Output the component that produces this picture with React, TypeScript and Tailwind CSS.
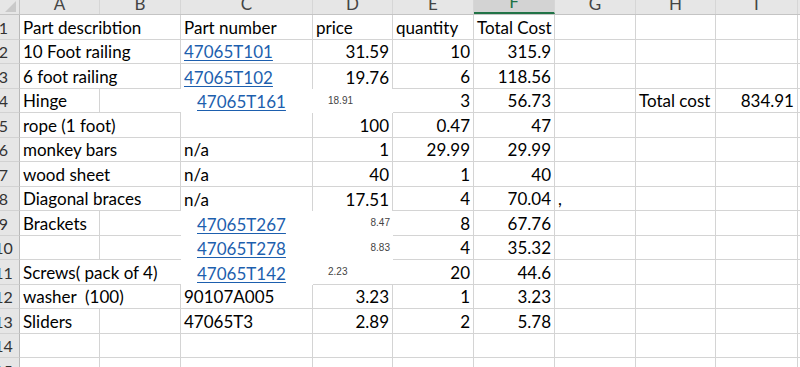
import React from "react";

// column widths in px, visible window only
const COLS: { key: string; w: number }[] = [
  { key: "A", w: 80 },
  { key: "B", w: 81 },
  { key: "C", w: 132 },
  { key: "D", w: 80 },
  { key: "E", w: 81 },
  { key: "F", w: 81 },
  { key: "G", w: 81 },
  { key: "H", w: 80 },
  { key: "I", w: 82 },
  { key: "J", w: 60 },
];

type Kind = "text" | "num" | "link" | "linkPad" | "small" | "smallRight";

interface Cell {
  v: string;
  kind?: Kind;
}

interface Row {
  n: number;
  spanAB?: boolean;
  hideR?: string[];
  hideB?: string[];
  cells: Record<string, Cell>;
}

const rows: Row[] = [
  {
    n: 1,
    spanAB: true,
    cells: {
      A: { v: "Part describtion" },
      C: { v: "Part number" },
      D: { v: "price" },
      E: { v: "quantity" },
      F: { v: "Total Cost" },
    },
  },
  {
    n: 2,
    spanAB: true,
    cells: {
      A: { v: "10 Foot railing" },
      C: { v: "47065T101", kind: "link" },
      D: { v: "31.59", kind: "num" },
      E: { v: "10", kind: "num" },
      F: { v: "315.9", kind: "num" },
    },
  },
  {
    n: 3,
    spanAB: true,
    hideB: ["C", "D"],
    cells: {
      A: { v: "6 foot railing" },
      C: { v: "47065T102", kind: "link" },
      D: { v: "19.76", kind: "num" },
      E: { v: "6", kind: "num" },
      F: { v: "118.56", kind: "num" },
    },
  },
  {
    n: 4,
    hideR: ["B", "C", "D"],
    hideB: ["C", "D"],
    cells: {
      A: { v: "Hinge" },
      C: { v: "47065T161", kind: "linkPad" },
      D: { v: "18.91", kind: "small" },
      E: { v: "3", kind: "num" },
      F: { v: "56.73", kind: "num" },
      H: { v: "Total cost" },
      I: { v: "834.91", kind: "num" },
    },
  },
  {
    n: 5,
    spanAB: true,
    cells: {
      A: { v: "rope (1 foot)" },
      D: { v: "100", kind: "num" },
      E: { v: "0.47", kind: "num" },
      F: { v: "47", kind: "num" },
    },
  },
  {
    n: 6,
    spanAB: true,
    cells: {
      A: { v: "monkey bars" },
      C: { v: "n/a" },
      D: { v: "1", kind: "num" },
      E: { v: "29.99", kind: "num" },
      F: { v: "29.99", kind: "num" },
    },
  },
  {
    n: 7,
    spanAB: true,
    cells: {
      A: { v: "wood sheet" },
      C: { v: "n/a" },
      D: { v: "40", kind: "num" },
      E: { v: "1", kind: "num" },
      F: { v: "40", kind: "num" },
    },
  },
  {
    n: 8,
    spanAB: true,
    hideB: ["C", "D"],
    cells: {
      A: { v: "Diagonal braces" },
      C: { v: "n/a" },
      D: { v: "17.51", kind: "num" },
      E: { v: "4", kind: "num" },
      F: { v: "70.04", kind: "num" },
      G: { v: "," },
    },
  },
  {
    n: 9,
    hideR: ["B", "C", "D"],
    hideB: ["C", "D"],
    cells: {
      A: { v: "Brackets" },
      C: { v: "47065T267", kind: "linkPad" },
      D: { v: "8.47", kind: "smallRight" },
      E: { v: "8", kind: "num" },
      F: { v: "67.76", kind: "num" },
    },
  },
  {
    n: 10,
    hideR: ["B", "C", "D"],
    hideB: ["C", "D"],
    cells: {
      C: { v: "47065T278", kind: "linkPad" },
      D: { v: "8.83", kind: "smallRight" },
      E: { v: "4", kind: "num" },
      F: { v: "35.32", kind: "num" },
    },
  },
  {
    n: 11,
    spanAB: true,
    hideR: ["B", "C", "D"],
    hideB: ["C"],
    cells: {
      A: { v: "Screws( pack of 4)" },
      C: { v: "47065T142", kind: "linkPad" },
      D: { v: "2.23", kind: "small" },
      E: { v: "20", kind: "num" },
      F: { v: "44.6", kind: "num" },
    },
  },
  {
    n: 12,
    spanAB: true,
    cells: {
      A: { v: "washer  (100)" },
      C: { v: "90107A005" },
      D: { v: "3.23", kind: "num" },
      E: { v: "1", kind: "num" },
      F: { v: "3.23", kind: "num" },
    },
  },
  {
    n: 13,
    cells: {
      A: { v: "Sliders" },
      C: { v: "47065T3" },
      D: { v: "2.89", kind: "num" },
      E: { v: "2", kind: "num" },
      F: { v: "5.78", kind: "num" },
    },
  },
  { n: 14, cells: {} },
  { n: 15, cells: {} },
];

const CellContent: React.FC<{ cell?: Cell }> = ({ cell }) => {
  if (!cell) return null;
  switch (cell.kind) {
    case "num":
      return <span className="ml-auto pr-[3px] pb-[3px]">{cell.v}</span>;
    case "link":
      return (
        <span className="pl-[3px] pb-[3px] text-[#1d5fae] underline decoration-1 underline-offset-2">
          {cell.v}
        </span>
      );
    case "linkPad":
      return (
        <span className="pl-[16px] pb-[3px] text-[#1d5fae] underline decoration-1 underline-offset-2">
          {cell.v}
        </span>
      );
    case "small":
      return (
        <span className="self-center pl-[15px] font-['Liberation_Sans',Arial,sans-serif] text-[10px] text-[#444]">
          {cell.v}
        </span>
      );
    case "smallRight":
      return (
        <span className="self-center ml-auto pr-[3px] font-['Liberation_Sans',Arial,sans-serif] text-[10px] text-[#444]">
          {cell.v}
        </span>
      );
    default:
      return <span className="pl-[3px] pb-[3px] whitespace-pre">{cell.v}</span>;
  }
};

const SheetRow: React.FC<{ row: Row }> = ({ row }) => {
  const cols = row.spanAB
    ? [{ key: "A", w: 161 }, ...COLS.slice(2)]
    : COLS;
  return (
    <div className="flex h-[24.5px]">
      <div className="w-[32px] shrink-0 -ml-[12px] bg-[#e6e6e6] border-r border-b border-r-[#b9b9b9] border-b-[#d2d2d2] flex items-end justify-center pb-[3px] text-[16px] leading-none text-[#333]">
        {row.n}
      </div>
      {cols.map((c) => {
        // when A spans B, the right edge of the merged cell is B's edge
        const rightKey = row.spanAB && c.key === "A" ? "B" : c.key;
        const noR = row.hideR?.includes(rightKey);
        const noB = row.hideB?.includes(c.key);
        return (
          <div
            key={c.key}
            style={{ width: c.w }}
            className={`shrink-0 flex items-end leading-none overflow-visible border-[#d4d4d4] ${
              noR ? "" : "border-r"
            } ${noB ? "" : "border-b"}`}
          >
            <CellContent cell={row.cells[c.key]} />
          </div>
        );
      })}
    </div>
  );
};

export default function App() {
  return (
    <div className="w-[800px] h-[367px] overflow-hidden bg-white font-['Lato','Liberation_Sans',sans-serif] text-[17px] text-black">
      {/* column letters */}
      <div className="flex h-[15px] border-b border-[#c4c4c4] bg-[#e6e6e6]">
        <div className="w-[32px] shrink-0 -ml-[12px] relative border-r border-[#c4c4c4] overflow-hidden">
          <svg className="absolute right-[3px] bottom-[2px]" width="11" height="11" viewBox="0 0 11 11">
            <polygon points="11,0 11,11 0,11" fill="#c9c9c9" />
          </svg>
        </div>
        {COLS.map((c) => (
          <div
            key={c.key}
            style={{ width: c.w }}
            className={`shrink-0 flex items-end justify-center pb-[2px] leading-none text-[17px] border-r border-[#d6d6d6] ${
              c.key === "F"
                ? "bg-[#d3d3d3] text-[#217346] border-b-2 border-b-[#217346]"
                : "text-[#444]"
            }`}
          >
            {c.key}
          </div>
        ))}
      </div>
      {rows.map((r) => (
        <SheetRow key={r.n} row={r} />
      ))}
    </div>
  );
}
